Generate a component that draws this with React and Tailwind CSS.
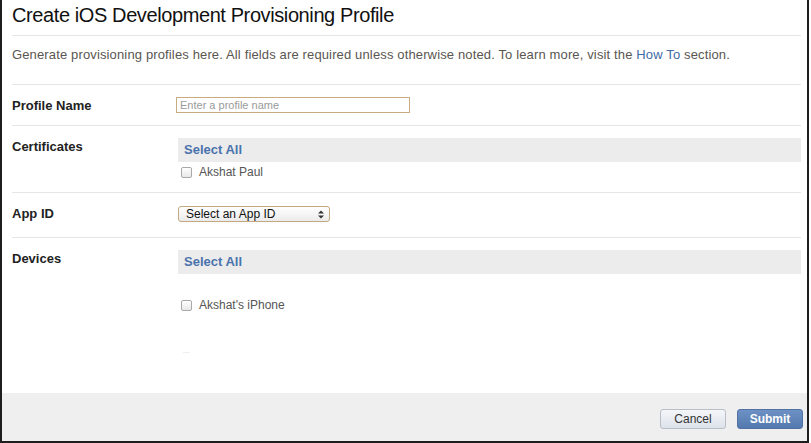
import React from "react";

const font = { fontFamily: '"Liberation Sans", Arial, sans-serif' };

const Checkbox = ({ label }) => (
  <label className="flex items-center gap-[7px] text-[12px] leading-[14px] text-[#555]">
    <span className="w-[11px] h-[11px] rounded-[2px] border border-[#a9a9a9] bg-gradient-to-b from-white to-[#e8e8e8]" />
    {label}
  </label>
);

const SelectAllBar = () => (
  <div className="h-[24px] bg-[#ececec] flex items-center pl-[6px] text-[13px] font-bold text-[#4a73ad]">
    Select All
  </div>
);

const Row = ({ label, height, children }) => (
  <div className="flex border-t border-[#e6e6e6]" style={{ height }}>
    <div className="w-[164px] pt-[13px] text-[13px] leading-[16px] font-bold text-[#222]">
      {label}
    </div>
    <div className="flex-1 pt-[12px]">{children}</div>
  </div>
);

export default function App() {
  return (
    <div className="w-[811px] h-[443px] bg-white" style={font}>
      <div className="w-[809px] h-[443px] border-l-2 border-r-2 border-b-2 border-[#1e1e1e] flex flex-col">
        <div className="flex-1 pl-[10px] pr-[6px]">
          <h1 className="h-[35px] pt-[3px] text-[20px] leading-[24px] tracking-[-0.4px] text-[#111]">
            Create iOS Development Provisioning Profile
          </h1>
          <div className="h-[49px] border-t border-[#e6e6e6] pt-[11px] text-[13px] leading-[16px] tracking-[0.14px] text-[#5a5651]">
            Generate provisioning profiles here. All fields are required unless otherwise noted. To learn more, visit the{" "}
            <span className="text-[#3f6ca3]">How To</span> section.
          </div>

          <Row label="Profile Name" height={41}>
            <input
              placeholder="Enter a profile name"
              className="block w-[234px] h-[16px] border border-[#c9ab80] px-[3px] text-[11px] leading-[14px] placeholder:text-[#9a9a9a] outline-none"
              style={font}
            />
          </Row>

          <Row label="Certificates" height={67}>
            <div className="pl-[2px]">
              <SelectAllBar />
              <div className="pt-[3px] pl-[3px]">
                <Checkbox label="Akshat Paul" />
              </div>
            </div>
          </Row>

          <Row label="App ID" height={45}>
            <div className="pl-[2px] pt-[1px]">
              <div className="w-[152px] h-[16px] rounded-[3px] border border-[#c4a880] bg-gradient-to-b from-white to-[#ebebeb] flex items-center justify-between pl-[7px] pr-[5px] text-[12px] text-[#111]">
                <span>Select an App ID</span>
                <svg width="6" height="9" viewBox="0 0 6 9">
                  <path d="M0 3.5 L3 0.5 L6 3.5 Z" fill="#333" />
                  <path d="M0 5.5 L3 8.5 L6 5.5 Z" fill="#333" />
                </svg>
              </div>
            </div>
          </Row>

          <div className="flex border-t border-[#e6e6e6] h-[156px]">
            <div className="w-[164px] pt-[13px] text-[13px] leading-[16px] font-bold text-[#222]">
              Devices
            </div>
            <div className="flex-1 pt-[12px] pl-[2px]">
              <SelectAllBar />
              <div className="pt-[24px] pl-[3px]">
                <Checkbox label="Akshat's iPhone" />
              </div>
              <div className="mt-[40px] ml-[5px] w-[7px] h-[1px] bg-[#f0f0f0]" />
            </div>
          </div>
        </div>

        <div className="h-[48px] bg-[#efefef] flex items-start justify-end gap-[11px] pt-[16px] pr-[4px]">
          <button className="w-[66px] h-[20px] rounded-[3px] border border-[#b9bec6] bg-gradient-to-b from-[#f4f6f9] to-[#dde3ea] text-[12px] text-[#333]">
            Cancel
          </button>
          <button className="w-[66px] h-[20px] rounded-[3px] border border-[#4f72a3] bg-gradient-to-b from-[#6d91c4] to-[#5479ae] text-[12px] font-bold text-white">
            Submit
          </button>
        </div>
      </div>
    </div>
  );
}
